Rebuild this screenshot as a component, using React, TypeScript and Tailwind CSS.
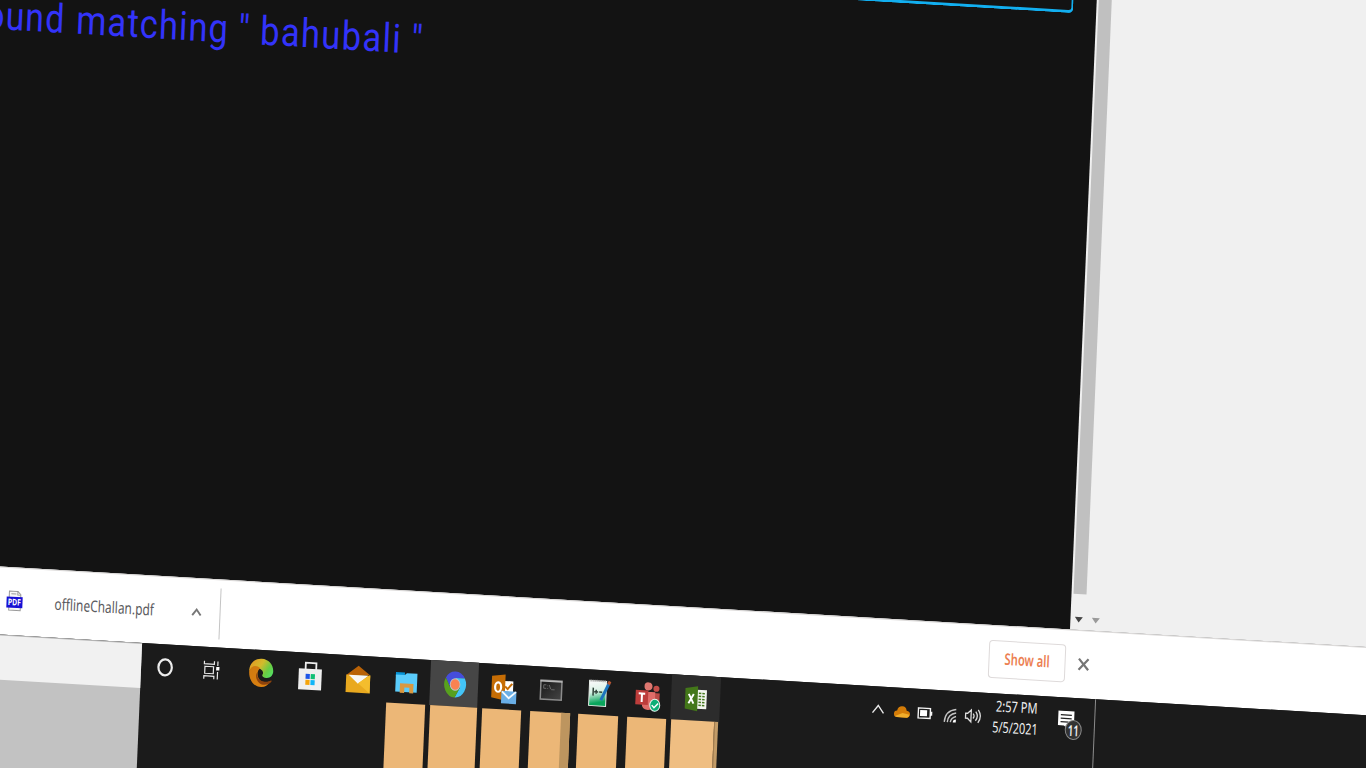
import React from "react";

type IconProps = { children: React.ReactNode; w: number; h: number; className?: string };

function Icon({ children, w, h, className = "" }: IconProps) {
  return (
    <svg width={w} height={h} viewBox={`0 0 ${w} ${h}`} fill="none" className={`shrink-0 ${className}`}>
      {children}
    </svg>
  );
}

function Cortana() {
  return (
    <Icon w={20} h={22}>
      <ellipse cx="10" cy="11" rx="6.7" ry="8" stroke="#ececec" strokeWidth="2.200" />
    </Icon>
  );
}

function TaskView() {
  return (
    <Icon w={20} h={22}>
      <path d="M3 2v3h10V2M3 20v-3h10v3M3.700 7.500h8.600v7H3.700zM16.500 2v4.500M16.500 12.500V20" stroke="#e8e8e8" strokeWidth="1.200" />
      <rect x="15" y="7.500" width="3.200" height="3.500" fill="#fff" />
    </Icon>
  );
}

function Edge() {
  return (
    <Icon w={26} h={30}>
      <defs>
        <linearGradient id="edgeTop" x1="2" y1="4" x2="25" y2="18" gradientUnits="userSpaceOnUse">
          <stop stopColor="#e39a22" />
          <stop offset=".4" stopColor="#d3bb2c" />
          <stop offset=".7" stopColor="#69cc43" />
          <stop offset="1" stopColor="#4fe36c" />
        </linearGradient>
        <linearGradient id="edgeLow" x1="2" y1="10" x2="20" y2="28" gradientUnits="userSpaceOnUse">
          <stop stopColor="#cf7a10" />
          <stop offset="1" stopColor="#dc8110" />
        </linearGradient>
      </defs>
      <path d="M1 14C1 6 6 .8 13 .8s12 5.200 12 12c0 4-2.700 6.800-6.500 6.800-3.500 0-5-1.600-4-3.200 1-1.500.4-4-2.500-5.400C8 9 2.500 10 1 14z" fill="url(#edgeTop)" />
      <path d="M1 14C2.600 8 8 7 12 10.200c-3 2-3.500 7.500-.5 11.300 2 2.500 6.500 3.500 11 1.500C20 27.500 17 29 13.500 29 6 29 1 22.500 1 14z" fill="url(#edgeLow)" />
      <path d="M9.500 14c-1.500 5 2 9.500 7.500 9.500 3 0 4.500-1 6-1.600.7-.3 1 .3.700.9C21 27 14 28 10.500 24 7.500 20.500 7.500 16.500 9.500 14z" fill="#8d430d" />
    </Icon>
  );
}

function Store() {
  return (
    <Icon w={26} h={32}>
      <path d="M8.200 10V3h10.600v7" stroke="#eee" strokeWidth="1.800" />
      <path d="M1.500 9h23v21h-23z" fill="#efefef" />
      <path d="M8.500 14h4.200v5H8.500z" fill="#1c55e8" />
      <path d="M13.600 14h4.200v5h-4.200z" fill="#10bf75" />
      <path d="M8.500 20h4.200v5H8.500z" fill="#f5a40b" />
      <path d="M13.600 20h4.200v5h-4.200z" fill="#10b6f8" />
    </Icon>
  );
}

function Mail() {
  return (
    <Icon w={26} h={30}>
      <path d="M1 11 13 1l12 9z" fill="#b96206" />
      <path d="M1 10.500h24V28H1z" fill="#e9a91f" />
      <path d="m3.500 10.500 9.500 8.500 10-8.500z" fill="#f7f7f7" />
      <path d="m25 9.500-12 9L25 28z" fill="#f4bd2d" />
    </Icon>
  );
}

function Explorer() {
  return (
    <Icon w={24} h={26}>
      <path d="M1.500 3h9v4h-9z" fill="#0694d6" />
      <path d="M1.500 5.500h9l2-2H23v19H1.500z" fill="#5accfb" />
      <path d="M6 23.500V14h13.500v9.500h-4V18h-5v5.500z" fill="#d99840" />
    </Icon>
  );
}

function Chrome() {
  return (
    <Icon w={24} h={28}>
      <g transform="translate(12 14) scale(.84 1)">
        <path d="M-11.260-6.500A13 13 0 0 1 11.260-6.500L0-6.500-5.630 3.250z" fill="#454ddb" />
        <path d="M11.260-6.500A13 13 0 0 1 0 13L5.630 3.250 0-6.500z" fill="#43c4f7" />
        <path d="M0 13A13 13 0 0 1-11.260-6.500L-5.630 3.250 5.630 3.250z" fill="#57a01e" />
        <circle r="6.300" fill="#b9c5cc" />
        <circle r="5.300" fill="#fa8251" />
      </g>
    </Icon>
  );
}

function Outlook() {
  return (
    <Icon w={28} h={32}>
      <path d="M14 8.500h9v11h-9z" fill="#fff" />
      <path d="m15 14 2.500 2.500L22 11" stroke="#c66d05" strokeWidth="2" />
      <path d="m1.500 4 13.500-2v26L1.500 25.500z" fill="#c66d05" />
      <ellipse cx="8" cy="15" rx="3" ry="4.700" stroke="#fff" strokeWidth="2.200" />
      <path d="M11.500 18.500h15V31h-15z" fill="#69aee6" />
      <path d="m12 19 7 6.500 7-6.500" stroke="#f4f9fd" strokeWidth="1.800" />
    </Icon>
  );
}

function Terminal() {
  return (
    <Icon w={24} h={22}>
      <defs>
        <linearGradient id="term" x1="0" y1="0" x2="24" y2="22" gradientUnits="userSpaceOnUse">
          <stop stopColor="#151515" />
          <stop offset="1" stopColor="#484848" />
        </linearGradient>
      </defs>
      <rect x="1.500" y="1.500" width="21" height="19" fill="url(#term)" stroke="#8b8b8b" strokeWidth="1.500" />
      <path d="M1 2.200h22" stroke="#bababa" strokeWidth="1.600" />
      <path d="M7 6H4.500v3.500H7M8.500 6.500v.8M8.500 9v.8M10 6l1.500 4M12 10.500h3.500" stroke="#777" strokeWidth=".8" />
    </Icon>
  );
}

function NotepadPlus() {
  return (
    <Icon w={24} h={30}>
      <defs>
        <linearGradient id="note" x1="2" y1="4" x2="8" y2="28" gradientUnits="userSpaceOnUse">
          <stop stopColor="#fafafa" />
          <stop offset=".45" stopColor="#d9f3e6" />
          <stop offset=".9" stopColor="#0aa55c" />
        </linearGradient>
      </defs>
      <path d="M2 3h17v25H2z" fill="url(#note)" stroke="#e8eee9" />
      <path d="M3 3h15" stroke="#999" strokeWidth="2" strokeDasharray="1 1" />
      <path d="M6 10v8M7 14h4M9 12v4M12 14h3" stroke="#30443a" strokeWidth="1.500" />
      <path d="m14 22 7.500-17" stroke="#1c75bd" strokeWidth="3" />
      <path d="m21 6 1.500-3" stroke="#b55432" strokeWidth="3" />
    </Icon>
  );
}

function Teams() {
  return (
    <Icon w={28} h={32}>
      <circle cx="14" cy="5.500" r="4" fill="#de7770" />
      <circle cx="22" cy="7.500" r="3" fill="#c34e49" />
      <path d="M18 12h7.500v10q-1 5-7.500 5z" fill="#b94a46" />
      <path d="M8 11h13v12q-1 6-7 6t-6-6z" fill="#df6d69" />
      <path d="M1.500 9.500h12.500v14.500H1.500z" fill="#bd3d3b" />
      <path d="M4.500 13h6.500M7.800 13v8.500" stroke="#fff" strokeWidth="2" />
      <ellipse cx="21" cy="24" rx="5" ry="6" fill="#0cae76" stroke="#e5f4ee" />
      <path d="m18 24 2.300 2.500 4-4.500" stroke="#fff" strokeWidth="1.500" />
    </Icon>
  );
}

function Excel() {
  return (
    <Icon w={24} h={28}>
      <path d="M12 5h10.500v19H12z" fill="#f3f5ef" />
      <path d="M14.500 8.500h6M14.500 11.500h6M14.500 14.500h6M14.500 17.500h6M14.500 20.500h6" stroke="#477a20" strokeWidth="1.500" />
      <path d="M17.500 6v16" stroke="#f3f5ef" />
      <path d="m1 4 12.500-2.500v25L1 24.500z" fill="#437719" />
      <path d="m4.500 9.500 5 9.500M9.500 9.500 4.500 19" stroke="#fff" strokeWidth="1.900" />
    </Icon>
  );
}

const apps = [
  { name: "cortana", Glyph: Cortana, cell: "pt-[2px]" },
  { name: "taskview", Glyph: TaskView, cell: "pt-[2px] pr-[4px]" },
  { name: "edge", Glyph: Edge, cell: "pt-[2px]" },
  { name: "store", Glyph: Store, cell: "pt-[2px]" },
  { name: "mail", Glyph: Mail, cell: "pt-[3px]" },
  { name: "explorer", Glyph: Explorer, cell: "pt-[3px]" },
  { name: "chrome", Glyph: Chrome, cell: "bg-[#464646] pt-[2px] pl-[1px]" },
  { name: "outlook", Glyph: Outlook, cell: "pt-[3px] pl-[2px]" },
  { name: "terminal", Glyph: Terminal, cell: "pt-[1px]" },
  { name: "notepad", Glyph: NotepadPlus, cell: "pt-[2px]" },
  { name: "teams", Glyph: Teams, cell: "pt-[4px] pl-[1px]" },
  { name: "excel", Glyph: Excel, cell: "bg-[#2c2c2c] pt-[1px]" },
];

function Page() {
  return (
    <main className="flex h-[665.4px] shrink-0 bg-[#f0f0f0]">
      <section className="w-[1114.2px] shrink-0 bg-[#131313]">
        <div className="ml-[500px] h-[49.600px] w-[591px] rounded-b-[5px] border-2 border-t-0 border-b-3 border-[#12aff0]" />
        <h1 className="mt-[41.300px] flex h-[50px] font-['Roboto',sans-serif] text-[40px] leading-[50px] font-normal whitespace-pre text-[#3333fa]">
          <span className="ml-[6px] block w-[90.500px] origin-left scale-x-[.845] tracking-[1.300px]">ound</span>
          <span className="block w-[162px] origin-left scale-x-[.86] tracking-[1.300px]">matching</span>
          <span className="block w-[22px] origin-left scale-x-[.9]">"</span>
          <span className="block w-[151px] origin-left scale-x-[.86] tracking-[1.600px]">bahubali</span>
          <span className="block origin-left scale-x-[.9]">"</span>
        </h1>
      </section>
      <div className="ml-[1.800px] flex w-[13px] flex-col">
        <div className="h-[628.700px] bg-[#c0c0c0]" />
        <svg width="13" height="8" viewBox="0 0 13 8" className="mt-[22px]">
          <path d="M2.300 1h8L6.300 6.500z" fill="#444" />
        </svg>
      </div>
      <svg width="13" height="8" viewBox="0 0 13 8" className="mt-[650.700px] ml-[3.600px]">
        <path d="M2.300 1h8L6.300 6.500z" fill="#9a9a9a" />
      </svg>
    </main>
  );
}

function DownloadShelf() {
  return (
    <footer className="flex h-[67.500px] shrink-0 items-center border-t border-[#dcdad9] bg-white font-['Noto_Sans',sans-serif] text-[16px]">
      <Icon w={18} h={22} className="mt-[-2px] ml-[50.500px]">
        <path d="M3.500 1h8.500l3 3v16H3.500z" fill="#f8f8f8" stroke="#999" />
        <path d="M12 1v3.500h3M5.500 3.500h5" stroke="#999" />
        <path d="M1 6.500h16v11H1z" fill="#1710d4" />
        <text x="9" y="15" textAnchor="middle" textLength="13" lengthAdjust="spacingAndGlyphs" fontSize="9" fontWeight="700" fill="#fff" fontFamily="Noto Sans">
          PDF
        </text>
      </Icon>
      <div className="mt-[-2px] ml-[31.500px] w-[100px]">
        <span className="block w-max origin-left scale-x-[.745] leading-[22px] text-[#5b5b60]">offlineChallan.pdf</span>
      </div>
      <Icon w={12} h={10} className="mt-[-1px] ml-[35.700px]">
        <path d="m1.800 8.200 4.200-5.700 4.200 5.700" stroke="#777" strokeWidth="1.900" />
      </Icon>
      <div className="ml-[17.300px] h-[51px] w-px bg-[#c4c4c4]" />
      <div className="mt-[-2px] ml-[768.500px] flex h-[38px] w-[77px] items-center rounded-[4px] border border-[#dedada] pl-[15px]">
        <span className="mt-[-1px] block w-max origin-left scale-x-[.7] leading-[22px] font-semibold whitespace-pre text-[#ec8052]">Show all</span>
      </div>
      <Icon w={14} h={16} className="mt-[-2px] ml-[10.900px]">
        <path d="m2.200 2.500 9.600 11M11.800 2.500l-9.600 11" stroke="#757575" strokeWidth="2.200" />
      </Icon>
    </footer>
  );
}

function Tray() {
  return (
    <div className="flex h-[45px] items-center">
      <Icon w={14} h={12} className="mt-[2px] ml-[151px]">
        <path d="m1.500 9.500 5.500-7.500 5.500 7.500" stroke="#e8e8e8" strokeWidth="1.400" />
      </Icon>
      <Icon w={18} h={14} className="mt-[3px] ml-[8px]">
        <path d="M4 12.500q-3 0-3-3.200T4 6q1-4.500 5-4.500t4.500 4Q17 6 17 9t-3 3.500z" fill="#d47c08" />
        <path d="m2 11.500 7.500-3.500 7 1.500q-.5 3-2.500 3H4z" fill="#f0ad2b" />
      </Icon>
      <Icon w={16} h={14} className="mt-[3px] ml-[6.500px]">
        <path d="M1.200 2h12v10h-12zM14.500 5v4" stroke="#f5f5f5" strokeWidth="1.400" />
        <path d="M3 4h7v6H3z" fill="#fff" />
      </Icon>
      <Icon w={15} h={16} className="mt-[5px] ml-[9.500px]">
        <path d="M1.500 14.500Q2 3 13 1.500M4.500 14.500Q5 6.500 13 5M7.500 14.500Q8 10 13 8.500" stroke="#c4c4c4" strokeWidth="1.400" />
        <path d="M10 14.500q0-3 3-3v3z" fill="#fff" />
      </Icon>
      <Icon w={18} h={18} className="mt-[3px] ml-[6px]">
        <path d="M1.500 6.500h2L7 3v12l-3.500-3.500h-2zM9 6.500q2 2.500 0 5M11.500 4.500q3.500 4.500 0 9M14 2.500q4.500 6.500 0 13" stroke="#ddd" strokeWidth="1.300" />
      </Icon>
      <div className="mt-[1px] ml-[11px] flex w-[46px] flex-col items-center font-['Noto_Sans',sans-serif] text-[15px] leading-[20.500px] text-[#f1f1f1]">
        <span className="block w-max scale-x-[.74]">2:57 PM</span>
        <span className="block w-max scale-x-[.73]">5/5/2021</span>
      </div>
      <div className="relative mt-[2px] ml-[18.500px] h-[20px] w-[18px]">
        <Icon w={18} h={20}>
          <path d="M1 .5h16v14.500h-5v4l-5-4H1z" fill="#fff" />
          <path d="M3.500 4.500h11M3.500 8h11M3.500 11.500h8" stroke="#222" strokeWidth="1.300" />
        </Icon>
        <span className="absolute top-[9px] left-[8px] flex h-[20px] w-[17px] items-center justify-center rounded-[50%] border border-[#8a8a8a] bg-[#333] font-['Noto_Sans',sans-serif] text-[15px] font-semibold text-[#eee]">
          <span className="scale-x-[.65]">11</span>
        </span>
      </div>
    </div>
  );
}

function Taskbar() {
  return (
    <div className="flex min-h-0 grow bg-[#1b1b1b]">
      <div className="flex w-[188.700px] shrink-0 flex-col border-t border-[#b5b5b5] bg-[#c2c2c2]">
        <div className="h-[44px] bg-[#f1f1f1]" />
      </div>
      <div className="flex w-[579px] shrink-0 flex-col">
        <div className="flex h-[45px] shrink-0">
          {apps.map(({ name, Glyph, cell }) => (
            <div key={name} className={`flex w-[48.250px] shrink-0 items-center justify-center ${cell}`}>
              <Glyph />
            </div>
          ))}
        </div>
        <div className="flex grow pl-[246.100px]">
          <div className="w-[39px] bg-[#ecb777]" />
          <div className="ml-[5px] w-[47.600px] bg-[#ecb777]" />
          <div className="ml-[5px] w-[39.100px] bg-[#ecb777]" />
          <div className="ml-[8.300px] w-[40px] border-r-[9px] border-[#bd955f] bg-[#ecb777]" />
          <div className="ml-[8.500px] w-[39.500px] bg-[#ecb777]" />
          <div className="ml-[9px] w-[39.200px] bg-[#ecb777]" />
          <div className="ml-[4.800px] w-[43.500px] bg-[#efbe82]" />
          <div className="w-[4px] border-l border-[#a07b4f] bg-[#c39c68]" />
        </div>
      </div>
      <div className="w-[375.300px] shrink-0 border-r border-[#8c8c8c]">
        <Tray />
      </div>
    </div>
  );
}

export default function App() {
  return (
    <div className="h-screen w-screen overflow-hidden bg-[#131313]">
      <div className="flex h-[900px] w-[1440px] origin-top-left [transform:matrix(1,0.059,-0.0425,1,-15.75,-101.18)] flex-col">
        <Page />
        <DownloadShelf />
        <Taskbar />
      </div>
    </div>
  );
}
